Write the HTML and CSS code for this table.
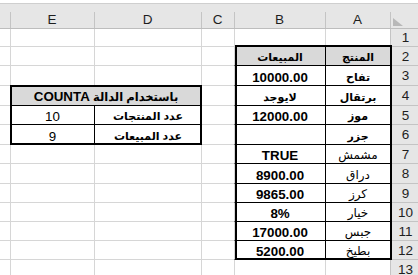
FILE: index.html
```html
<!DOCTYPE html>
<html lang="ar">
<head>
<meta charset="utf-8">
<title>COUNTA</title>
<link rel="stylesheet" href="styles.css">
</head>
<body>
<div class="sheet">
  <div class="row r0">
    <div class="hd h corner"><svg class="tri" width="10" height="8" viewBox="0 0 10 8"><polygon points="0,0 0,8 10,8" fill="#b8b8b8"/></svg></div>
    <div class="hd a">A</div>
    <div class="hd b">B</div>
    <div class="hd c">C</div>
    <div class="hd d">D</div>
    <div class="hd e">E</div>
    <div class="hd f"></div>
  </div>
  <div class="row r1">
    <div class="rh h">1</div><div class="cell a"></div><div class="cell b"></div><div class="cell c"></div><div class="cell d"></div><div class="cell e"></div><div class="cell f"></div>
  </div>
  <div class="row r2">
    <div class="rh h">2</div>
    <div class="cell a t th">المنتج</div>
    <div class="cell b tb th">المبيعات</div>
    <div class="cell c"></div><div class="cell d"></div><div class="cell e"></div><div class="cell f"></div>
  </div>
  <div class="row r3">
    <div class="rh h">3</div>
    <div class="cell a t bold arb">تفاح</div>
    <div class="cell b tb bold">10000.00</div>
    <div class="cell c"></div><div class="cell d"></div><div class="cell e"></div><div class="cell f"></div>
  </div>
  <div class="row r4">
    <div class="rh h">4</div>
    <div class="cell a t bold arb">برتقال</div>
    <div class="cell b tb bold arb">لايوجد</div>
    <div class="cell c"></div>
    <div class="cell de t th"><span>باستخدام الدالة <b class="lat">COUNTA</b></span></div>
    <div class="cell f"></div>
  </div>
  <div class="row r5">
    <div class="rh h">5</div>
    <div class="cell a t bold arb">موز</div>
    <div class="cell b tb bold">12000.00</div>
    <div class="cell c"></div>
    <div class="cell d t bold arb">عدد المنتجات</div>
    <div class="cell e tb">10</div>
    <div class="cell f"></div>
  </div>
  <div class="row r6">
    <div class="rh h">6</div>
    <div class="cell a t bold arb">جزر</div>
    <div class="cell b tb"></div>
    <div class="cell c"></div>
    <div class="cell d t bold arb">عدد المبيعات</div>
    <div class="cell e tb">9</div>
    <div class="cell f"></div>
  </div>
  <div class="row r7">
    <div class="rh h">7</div>
    <div class="cell a t ar">مشمش</div>
    <div class="cell b tb bold">TRUE</div>
    <div class="cell c"></div><div class="cell d"></div><div class="cell e"></div><div class="cell f"></div>
  </div>
  <div class="row r8">
    <div class="rh h">8</div>
    <div class="cell a t ar">دراق</div>
    <div class="cell b tb bold">8900.00</div>
    <div class="cell c"></div><div class="cell d"></div><div class="cell e"></div><div class="cell f"></div>
  </div>
  <div class="row r9">
    <div class="rh h">9</div>
    <div class="cell a t ar">كرز</div>
    <div class="cell b tb bold">9865.00</div>
    <div class="cell c"></div><div class="cell d"></div><div class="cell e"></div><div class="cell f"></div>
  </div>
  <div class="row r10">
    <div class="rh h">10</div>
    <div class="cell a t ar">خيار</div>
    <div class="cell b tb bold">8%</div>
    <div class="cell c"></div><div class="cell d"></div><div class="cell e"></div><div class="cell f"></div>
  </div>
  <div class="row r11">
    <div class="rh h">11</div>
    <div class="cell a t ar">جبس</div>
    <div class="cell b tb bold">17000.00</div>
    <div class="cell c"></div><div class="cell d"></div><div class="cell e"></div><div class="cell f"></div>
  </div>
  <div class="row r12">
    <div class="rh h">12</div>
    <div class="cell a t ar">بطيخ</div>
    <div class="cell b tb bold">5200.00</div>
    <div class="cell c"></div><div class="cell d"></div><div class="cell e"></div><div class="cell f"></div>
  </div>
  <div class="row r13">
    <div class="rh h">13</div>
    <div class="cell a"></div><div class="cell b"></div><div class="cell c"></div><div class="cell d"></div><div class="cell e"></div><div class="cell f"></div>
  </div>
  <div class="frame frame-ab"></div>
  <div class="frame frame-de"></div>
</div>
</body>
</html>
```
FILE: styles.css
```css
html, body {
  margin: 0;
  background: #fff;
}
body {
  padding-top: 3px;
  overflow: hidden;
  font-family: "Liberation Sans", "DejaVu Sans", Arial, sans-serif;
  color: #000;
}
.sheet {
  display: grid;
  direction: rtl;
  width: 418px;
  grid-template-columns: 28px 65px 91px 33px 107px 84px 10px;
  grid-template-rows: 26px 18px 19px 20px 20px 19px 20px 19px 20px 19px 19px 19px 19px 19px;
}
.row { display: contents; }

.h { grid-column: 1; }
.a { grid-column: 2; }
.b { grid-column: 3; }
.c { grid-column: 4; }
.d { grid-column: 5; }
.e { grid-column: 6; }
.f { grid-column: 7; }
.de { grid-column: 5 / 7; }

.r0 > * { grid-row: 1; }
.r1 > * { grid-row: 2; }
.r2 > * { grid-row: 3; }
.r3 > * { grid-row: 4; }
.r4 > * { grid-row: 5; }
.r5 > * { grid-row: 6; }
.r6 > * { grid-row: 7; }
.r7 > * { grid-row: 8; }
.r8 > * { grid-row: 9; }
.r9 > * { grid-row: 10; }
.r10 > * { grid-row: 11; }
.r11 > * { grid-row: 12; }
.r12 > * { grid-row: 13; }
.r13 > * { grid-row: 14; }

/* column headers */
.hd {
  background: linear-gradient(#c4c4c4, #c4c4c4) left bottom / 1px 16px no-repeat, #e6e6e6;
  border-top: 1px solid #cfcfcf;
  border-bottom: 1px solid #bdbdbd;
  display: flex;
  align-items: flex-end;
  justify-content: center;
  font-size: 13.5px;
  line-height: 15px;
  padding-bottom: 1px;
  color: #1e1e1e;
  min-width: 0;
}
.hd.f { background: #e6e6e6; }
.corner {
  justify-content: flex-end;
  padding-left: 3px;
  padding-bottom: 2px;
}
.tri { display: block; }

/* row headers */
.rh {
  background: #e6e6e6;
  border-left: 1px solid #c4c4c4;
  border-bottom: 1px solid #c4c4c4;
  display: flex;
  align-items: center;
  justify-content: center;
  padding-left: 2px;
  font-size: 13.5px;
  line-height: 15px;
  color: #1e1e1e;
}

/* body cells */
.cell {
  border-left: 1px solid #d6d6d6;
  border-bottom: 1px solid #d6d6d6;
  display: flex;
  align-items: flex-end;
  justify-content: center;
  font-size: 13.33px;
  line-height: 15px;
  white-space: nowrap;
  overflow: hidden;
  min-width: 0;
}
.cell.f { border-left: 0; }

/* bordered table cells */
.t { border-left-color: #000; border-bottom-color: #000; }
.tb { border-bottom-color: #000; }
.th {
  background: #d9d9d9;
  font-weight: 700;
  font-size: 11px;
}
.de.th { font-size: 11.5px; }
.lat { font-size: 13.33px; }
.bold { font-weight: 700; }
.ar { font-size: 12px; }
.arb { font-size: 11px; }

/* range outlines drawn over the gridlines */
.frame {
  border: 2px solid #000;
  pointer-events: none;
}
.frame-ab {
  grid-row: 3 / 14;
  grid-column: 2 / 4;
  margin: -2px -2px 0 1px;
}
.frame-de {
  grid-row: 5 / 8;
  grid-column: 5 / 7;
  margin: -1px -1px 0 0;
}
```
